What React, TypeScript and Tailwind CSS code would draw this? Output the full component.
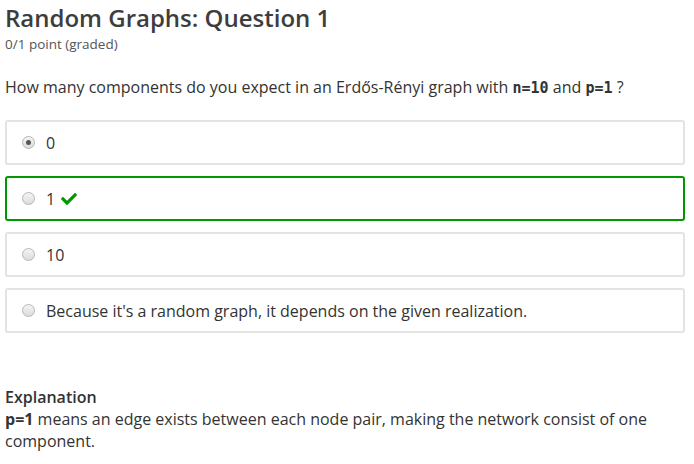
import { FaCheck } from 'react-icons/fa'

const options = [
  { label: '0', checked: true, correct: false },
  { label: '1', checked: false, correct: true },
  { label: '10', checked: false, correct: false },
  { label: "Because it's a random graph, it depends on the given realization.", checked: false, correct: false },
]

function Radio({ checked }: { checked: boolean }) {
  return (
    <span className="w-[13px] h-[13px] rounded-full border border-[#b5b5b5] bg-gradient-to-b from-[#f4f4f4] to-[#dcdcdc] flex items-center justify-center flex-shrink-0">
      {checked && <span className="w-[5px] h-[5px] rounded-full bg-[#555]" />}
    </span>
  )
}

export default function App() {
  return (
    <div className="bg-white w-[694px] h-[464px] px-[5px] pt-[2px] text-[#333] font-['Open_Sans',sans-serif]">
      <h2 className="text-[24px] leading-[32px] font-semibold text-[#3d3d3d]">Random Graphs: Question 1</h2>
      <p className="text-[13.5px] leading-[20px] text-[#555]">0/1 point (graded)</p>

      <p className="mt-[22px] text-[16px] leading-[22px]">
        How many components do you expect in an Erdős-Rényi graph with{' '}
        <code className="font-['DejaVu_Sans_Mono',monospace] font-bold text-[15px]">n=10</code> and{' '}
        <code className="font-['DejaVu_Sans_Mono',monospace] font-bold text-[15px]">p=1</code> ?
      </p>

      <div className="mt-[21px] w-[680px] flex flex-col gap-[11px]">
        {options.map((o, i) => (
          <div
            key={i}
            className={`h-[45px] rounded-[3px] border-2 flex items-center pl-[15px] gap-[11px] text-[16px] ${
              o.correct ? 'border-[#009800]' : 'border-[#e3e3e3]'
            }`}
          >
            <Radio checked={o.checked} />
            <span className="flex items-center gap-[6px]">
              {o.label}
              {o.correct && <FaCheck className="text-[#009800] w-[16px] h-[16px]" />}
            </span>
          </div>
        ))}
      </div>

      <div className="mt-[53px] text-[16px] leading-[22px]">
        <p className="font-semibold">Explanation</p>
        <p>
          <span className="font-bold">p=1</span> means an edge exists between each node pair, making the network consist of one
          component.
        </p>
      </div>
    </div>
  )
}
